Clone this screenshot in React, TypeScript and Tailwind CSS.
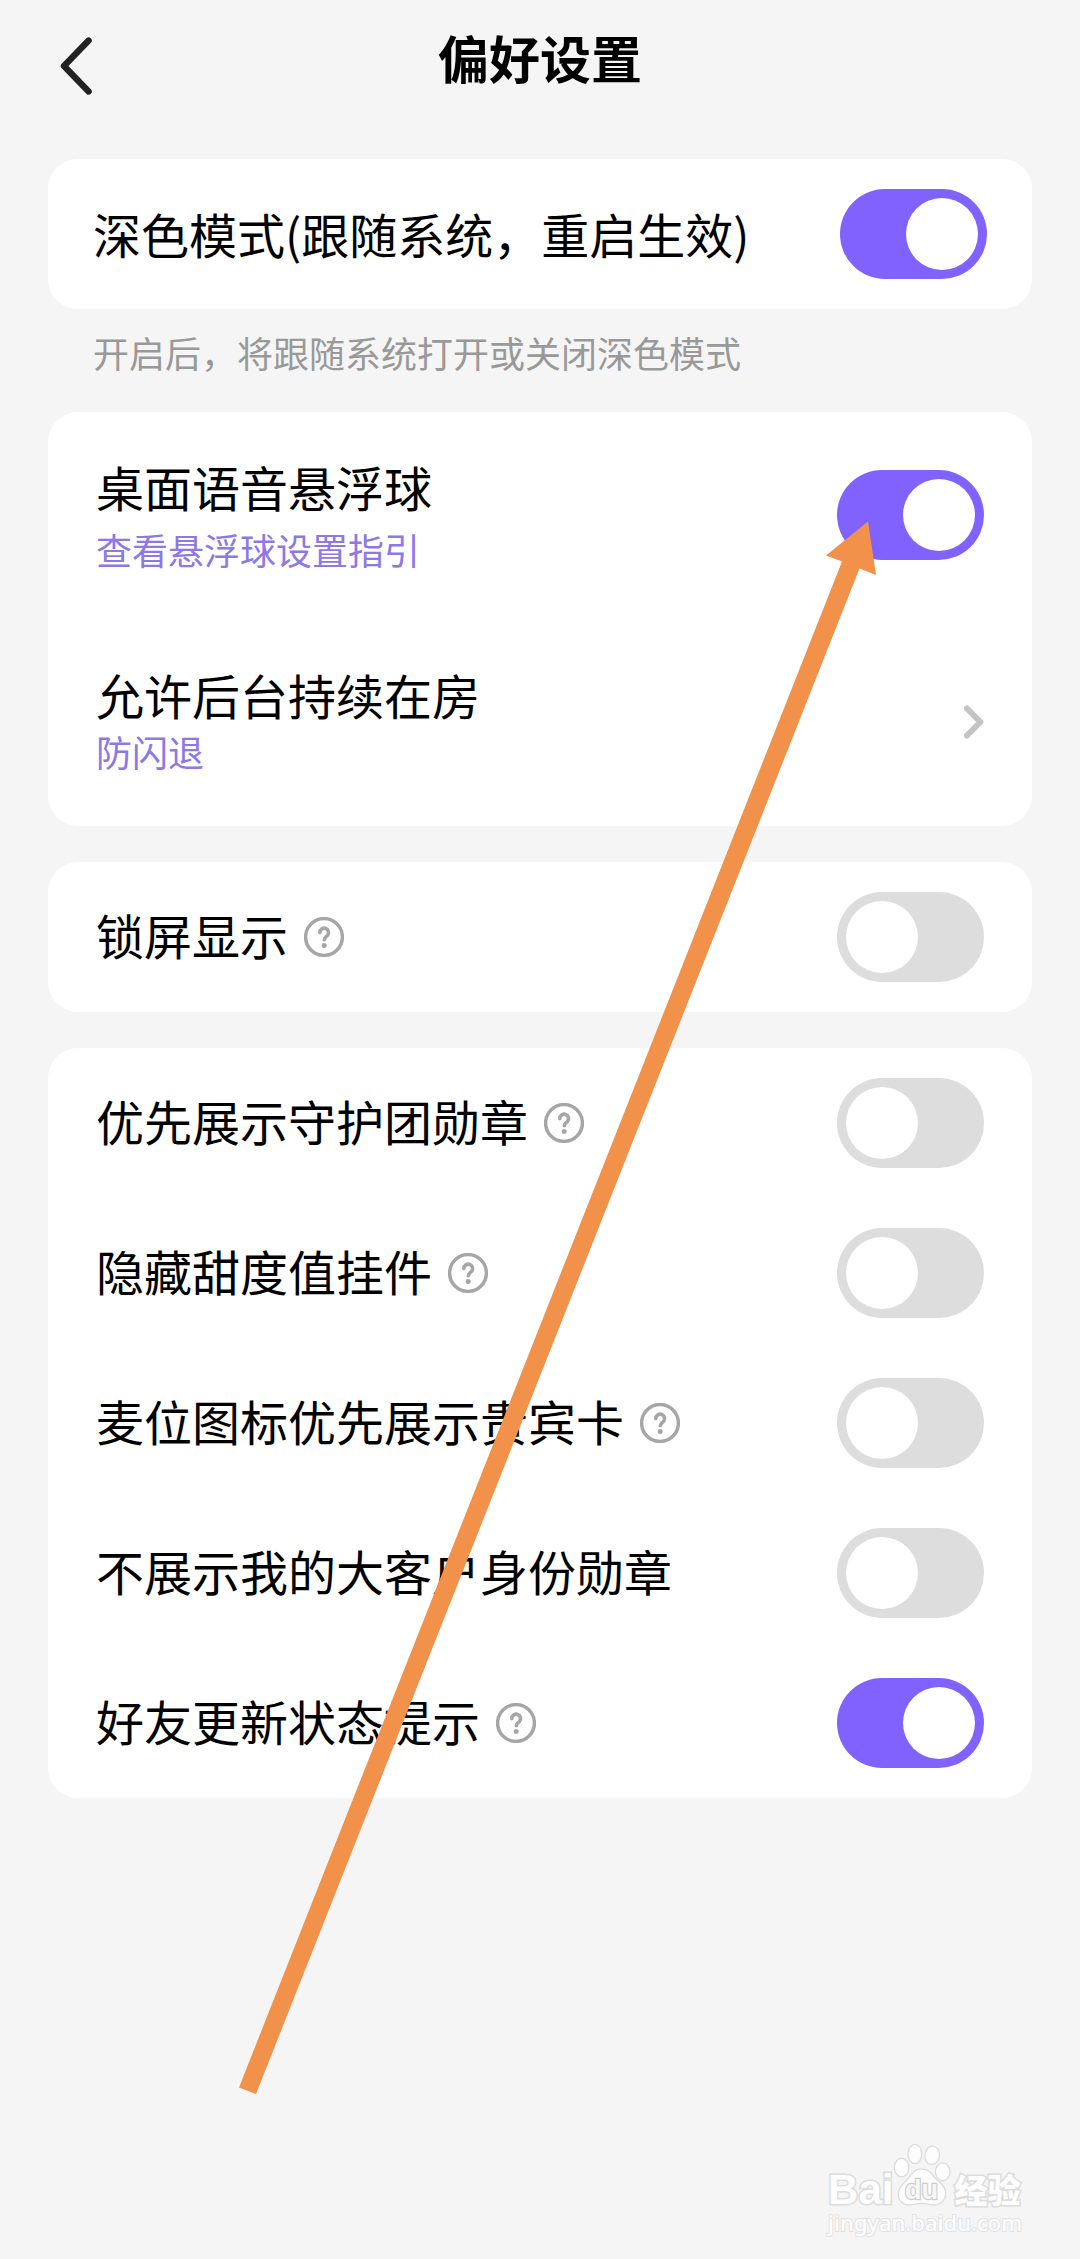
import React from "react";

type Setting = { id: string; label: string; help?: boolean; on?: boolean };

const badgeSettings: Setting[] = [
  { id: "guard", label: "优先展示守护团勋章", help: true },
  { id: "sweet", label: "隐藏甜度值挂件", help: true },
  { id: "vip", label: "麦位图标优先展示贵宾卡", help: true },
  { id: "client", label: "不展示我的大客户身份勋章" },
  { id: "friend", label: "好友更新状态提示", help: true, on: true },
];

function Toggle({ id, on = false }: { id: string; on?: boolean }) {
  return (
    <input
      id={id}
      type="checkbox"
      role="switch"
      defaultChecked={on}
      className="flex h-[90px] w-[147px] shrink-0 cursor-pointer appearance-none rounded-full bg-[#dddddd] p-[9px] after:size-[72px] after:rounded-full after:bg-white after:content-[''] checked:justify-end checked:bg-[#8062ff]"
    />
  );
}

function HelpButton({ label }: { label: string }) {
  return (
    <button type="button" aria-label={`${label}说明`} className="shrink-0 cursor-pointer">
      <svg viewBox="0 0 40 40" className="size-10" fill="none" stroke="#a6a6a6">
        <circle cx="20" cy="20" r="18.4" strokeWidth="3.4" />
        <path
          d="M15.8 15.6a4.4 4.4 0 1 1 7.6 3c-1.5 1.5-3.1 2-3.1 4.2"
          strokeWidth="3.6"
          strokeLinecap="round"
          strokeLinejoin="round"
        />
        <circle cx="20.2" cy="28.6" r="2.5" fill="#a6a6a6" stroke="none" />
      </svg>
    </button>
  );
}

function Card({ children }: { children: React.ReactNode }) {
  return <section className="rounded-[30px] bg-white">{children}</section>;
}

function SettingRow({ id, label, help, on }: Setting) {
  return (
    <div className="flex h-[150px] items-center justify-between px-12">
      <div className="flex items-center gap-4">
        <label htmlFor={id} className="pb-1.5 text-[48px] leading-[64px]">
          {label}
        </label>
        {help && <HelpButton label={label} />}
      </div>
      <Toggle id={id} on={on} />
    </div>
  );
}

function PointerArrow() {
  return (
    <svg
      viewBox="230 510 660 1600"
      className="pointer-events-none absolute top-[510px] left-[230px] h-[1600px] w-[660px]"
      aria-hidden="true"
    >
      <path d="M239 2087.5 842 561.5 826 555.5 868 521.5 876 575 859.5 568.5 256 2094Z" fill="#f2914a" />
    </svg>
  );
}

function Watermark() {
  return (
    <div className="pointer-events-none absolute right-[58px] bottom-[22px] flex flex-col text-[#fdfdfd]">
      <div className="flex items-end">
        <span className="font-['Liberation_Sans'] text-[42px] leading-[34px] font-bold [-webkit-text-stroke:3px_#dcdcdc] [paint-order:stroke_fill]">
          Bai
        </span>
        <svg viewBox="280 96 178 194" className="h-[65px] w-[59px]" fill="#fdfdfd" stroke="#dcdcdc" strokeWidth="4">
          <ellipse cx="306" cy="172" rx="22" ry="28" />
          <ellipse cx="346" cy="131" rx="21" ry="29" />
          <ellipse cx="398" cy="135" rx="22" ry="28" transform="rotate(8 398 135)" />
          <ellipse cx="430" cy="185" rx="22" ry="27" />
          <path d="M366 176c20 0 30 13 40 26 13 15 33 24 33 46 0 25-17 38-38 37-15-1-22-5-35-5s-20 4-35 5c-21 1-36-14-35-35 1-22 19-31 32-48 10-13 18-26 38-26Z" />
          <text
            x="366"
            y="268"
            textAnchor="middle"
            fontFamily="Liberation Sans"
            fontWeight="700"
            fontSize="82"
            stroke="#cccccc"
            strokeWidth="7"
            paintOrder="stroke"
            fill="#f6f6f6"
          >
            du
          </text>
        </svg>
        <span className="ml-0.5 text-[33px] leading-[36px] font-black [-webkit-text-stroke:3px_#dcdcdc] [paint-order:stroke_fill]">
          经验
        </span>
      </div>
      <span className="font-['Noto_Sans'] text-[22px] leading-[30px] font-medium [-webkit-text-stroke:2px_#e2e2e2] [paint-order:stroke_fill]">
        jingyan.baidu.com
      </span>
    </div>
  );
}

export default function App() {
  return (
    <div
      lang="zh-CN"
      className="relative min-h-screen bg-[#f5f5f5] font-['Noto_Sans_CJK_SC',sans-serif] text-black"
    >
      <header className="grid grid-cols-[1fr_auto_1fr] items-start">
        <button type="button" aria-label="返回" className="flex h-[132px] w-[152px] cursor-pointer items-center pl-[60px]">
          <svg
            viewBox="0 0 32 58"
            className="h-[58px] w-8"
            fill="none"
            stroke="#222222"
            strokeWidth="6.4"
            strokeLinecap="round"
            strokeLinejoin="round"
          >
            <path d="M28.6 3.6 4 29l24.6 25.4" />
          </svg>
        </button>
        <h1 className="text-[51px] leading-[114px] font-bold">偏好设置</h1>
      </header>

      <main className="px-12 pt-[27px]">
        <Card>
          <div className="flex h-[150px] items-center justify-between px-[45px]">
            <label htmlFor="dark" className="pb-0.5 text-[48px] leading-[64px]">
              深色模式(跟随系统，重启生效)
            </label>
            <Toggle id="dark" on />
          </div>
        </Card>
        <p className="px-[45px] pt-4 pb-[33px] text-[36px] leading-[54px] text-[#999999]">
          开启后，将跟随系统打开或关闭深色模式
        </p>

        <div className="flex flex-col gap-9">
          <Card>
            <div className="flex h-[206px] items-center justify-between px-12">
              <div className="flex flex-col gap-2 pb-1">
                <label htmlFor="float" className="text-[48px] leading-[64px]">
                  桌面语音悬浮球
                </label>
                <a href="#guide" className="text-[36px] leading-[46px] text-[#8c78e6]">
                  查看悬浮球设置指引
                </a>
              </div>
              <Toggle id="float" on />
            </div>
            <a href="#background" className="flex h-[208px] items-center justify-between px-12">
              <span className="flex flex-col gap-0.5 pb-2">
                <span className="text-[48px] leading-[64px]">允许后台持续在房</span>
                <span className="text-[36px] leading-[46px] text-[#8c78e6]">防闪退</span>
              </span>
              <svg
                viewBox="0 0 20 34"
                className="h-[34px] w-5"
                fill="none"
                stroke="#c4c4c4"
                strokeWidth="6"
                strokeLinecap="round"
                strokeLinejoin="round"
              >
                <path d="M3 3.5 16.4 17 3 30.5" />
              </svg>
            </a>
          </Card>

          <Card>
            <SettingRow id="lock" label="锁屏显示" help />
          </Card>

          <Card>
            {badgeSettings.map((s) => (
              <SettingRow key={s.id} {...s} />
            ))}
          </Card>
        </div>
      </main>

      <PointerArrow />
      <Watermark />
    </div>
  );
}
